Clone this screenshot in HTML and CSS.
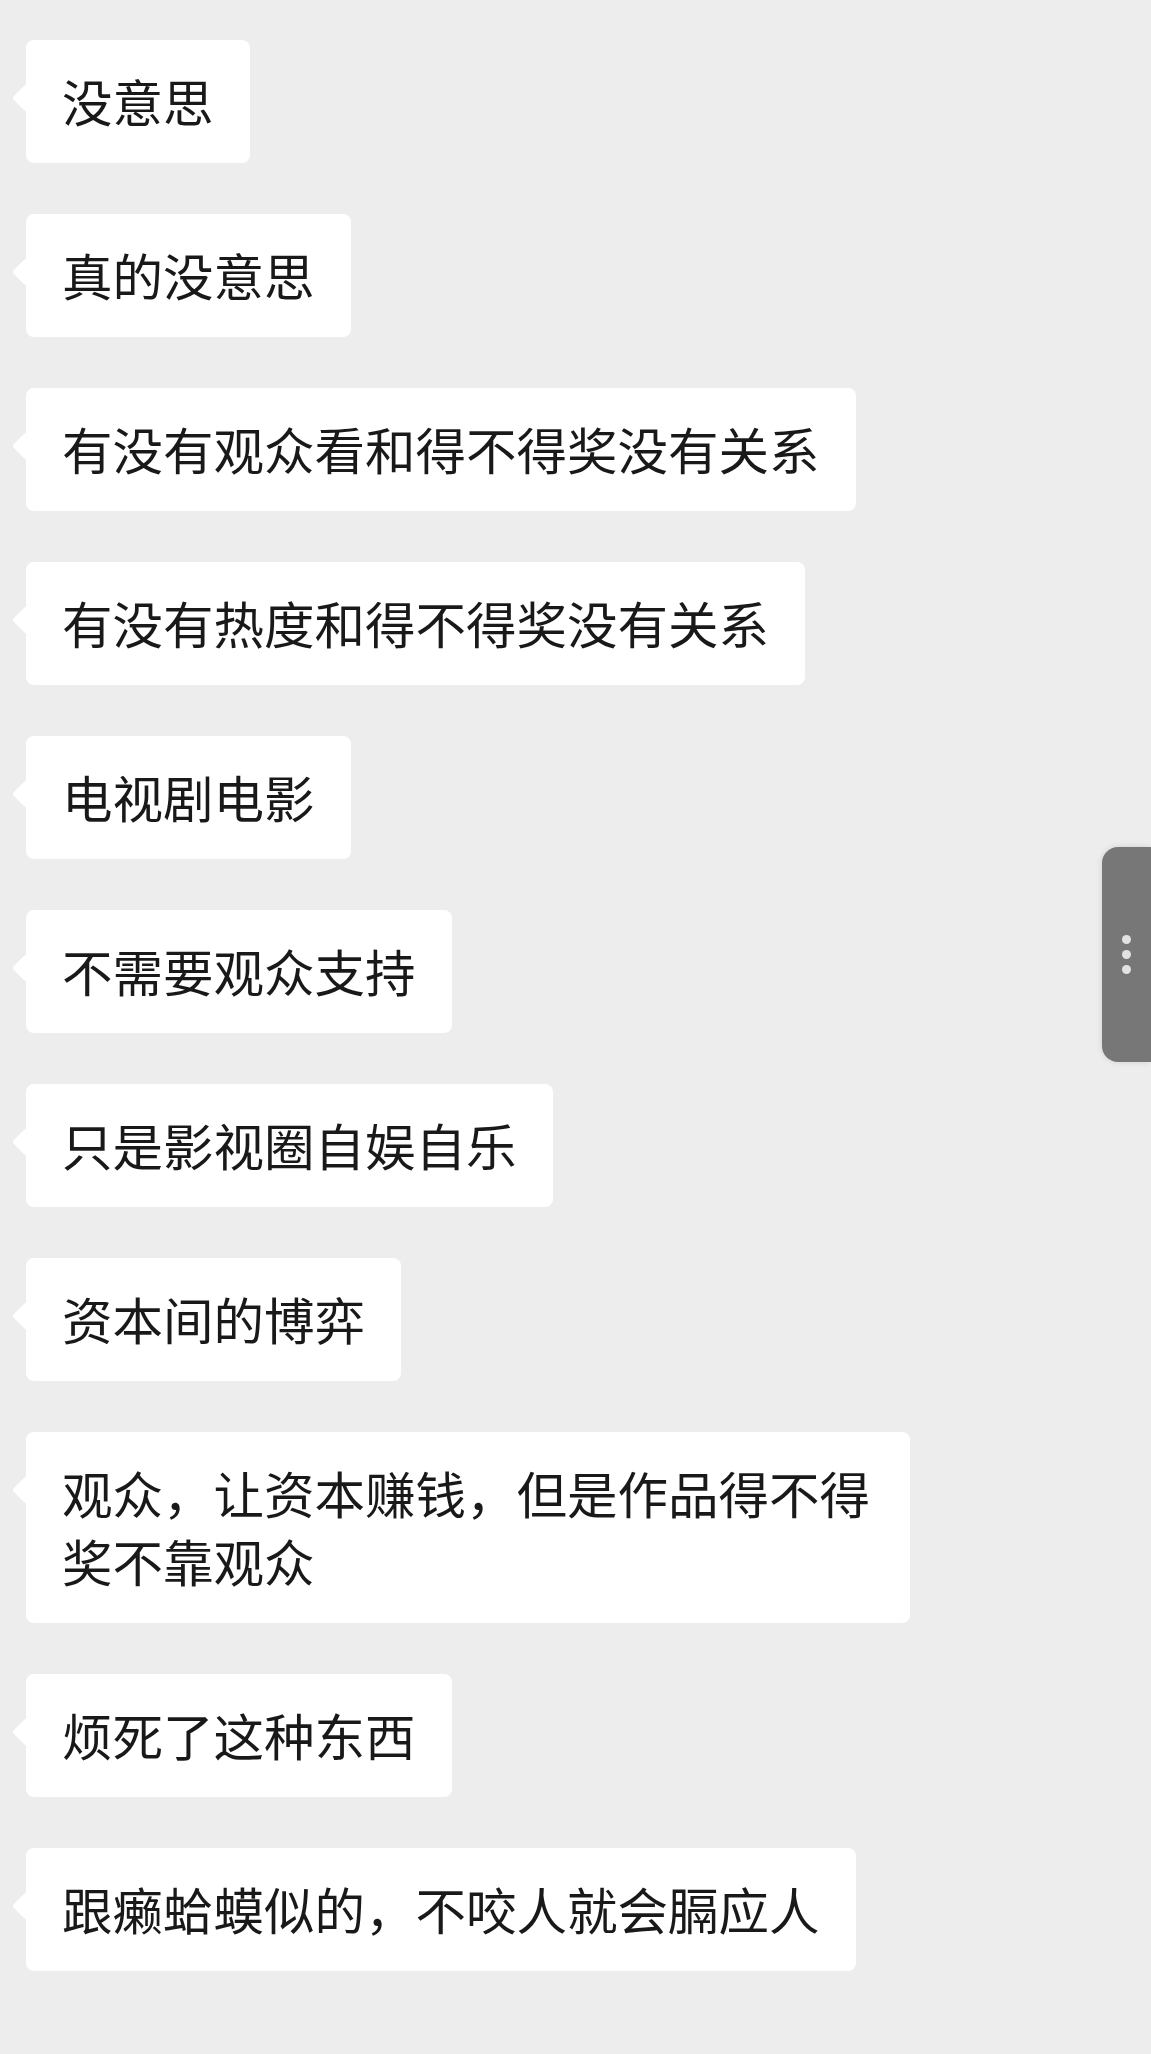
FILE: index.html
```html
<!DOCTYPE html>
<html lang="zh-CN">
<head>
  <meta charset="UTF-8" />
  <meta name="viewport" content="width=device-width, initial-scale=1.0"/>
  <title>聊天记录</title>
  <link rel="stylesheet" href="styles.css">
</head>
<body>

  <!-- Messages -->
  <div class="chat">
    <div class="bubble">没意思</div>
    <div class="bubble">真的没意思</div>
    <div class="bubble">有没有观众看和得不得奖没有关系</div>
    <div class="bubble">有没有热度和得不得奖没有关系</div>
    <div class="bubble">电视剧电影</div>
    <div class="bubble">不需要观众支持</div>
    <div class="bubble">只是影视圈自娱自乐</div>
    <div class="bubble">资本间的博弈</div>
    <div class="bubble">观众，让资本赚钱，但是作品得不得奖不靠观众</div>
    <div class="bubble">烦死了这种东西</div>
    <div class="bubble">跟癞蛤蟆似的，不咬人就会膈应人</div>
  </div>

  <!-- Side Handle -->
  <div class="side-handle">
    <span></span>
    <span></span>
    <span></span>
  </div>

</body>
</html>
```

FILE: styles.css
```css
body, html {
  margin: 0;
  background: #ededed;
  font-family: "Noto Sans CJK SC", "Noto Sans", sans-serif;
}

.chat {
  display: flex;
  flex-direction: column;
  align-items: flex-start;
  gap: 51px;
  padding: 40px 0 80px 26px;
}

.bubble {
  position: relative;
  background: #fff;
  color: #191919;
  font-size: 50.5px;
  line-height: 68px;
  padding: 25.5px 36px 29.5px;
  border-radius: 8px;
  max-width: 884px;
  box-sizing: border-box;
}

/* little tail on the left */
.bubble::before {
  content: "";
  position: absolute;
  left: -10px;
  top: 48px;
  width: 20px;
  height: 20px;
  background: #fff;
  border-radius: 3px;
  transform: rotate(45deg);
}

/* Side Handle */
.side-handle {
  position: fixed;
  top: 847px;
  right: 0;
  width: 49px;
  height: 215px;
  background: #777;
  border-radius: 16px 0 0 16px;
  box-shadow: 0 0 6px rgba(0, 0, 0, 0.12);
  display: flex;
  flex-direction: column;
  align-items: center;
  justify-content: center;
  gap: 6px;
}

.side-handle span {
  width: 9px;
  height: 9px;
  border-radius: 50%;
  background: #e2e2e2;
}
```
